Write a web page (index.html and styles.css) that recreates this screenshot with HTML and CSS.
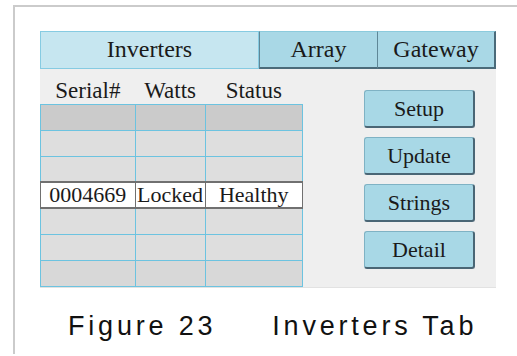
FILE: index.html
```html
<!DOCTYPE html>
<html lang="en">
<head>
    <meta charset="UTF-8">
    <meta name="viewport" content="width=device-width, initial-scale=1.0">
    <link rel="stylesheet" href="styles.css">
</head>
<body>
    <div class="frame">
        <div class="panel">
            <div class="tabs">
                <div class="tab active">Inverters</div>
                <div class="tab">Array</div>
                <div class="tab last">Gateway</div>
            </div>
            <div class="content">
                <table class="grid">
                    <thead>
                        <tr>
                            <th class="col-serial">Serial#</th>
                            <th class="col-watts">Watts</th>
                            <th class="col-status">Status</th>
                        </tr>
                    </thead>
                    <tbody>
                        <tr class="dark"><td></td><td></td><td></td></tr>
                        <tr><td></td><td></td><td></td></tr>
                        <tr><td></td><td></td><td></td></tr>
                        <tr class="selected"><td>0004669</td><td>Locked</td><td>Healthy</td></tr>
                        <tr><td></td><td></td><td></td></tr>
                        <tr><td></td><td></td><td></td></tr>
                        <tr class="bottom"><td></td><td></td><td></td></tr>
                    </tbody>
                </table>
                <div class="buttons">
                    <div class="btn">Setup</div>
                    <div class="btn">Update</div>
                    <div class="btn">Strings</div>
                    <div class="btn">Detail</div>
                </div>
            </div>
        </div>
        <p class="caption"><span>Figure 23</span><span class="caption-title">Inverters Tab</span></p>
    </div>
</body>
</html>
```

FILE: styles.css
```css
body {
    margin: 0;
    background-color: #fff;
    font-family: "Liberation Serif", "Times New Roman", serif;
    color: #1a1a1a;
}

.frame {
    margin: 5px 0 0 13px;
    height: 349px;
    border-top: 2px solid #cbcbcb;
    border-left: 2px solid #cbcbcb;
    padding: 24px 0 0 25px;
    box-sizing: border-box;
}

.panel {
    width: 456px;
    height: 257px;
}

.tabs {
    display: flex;
    height: 38px;
}

.tab {
    width: 118px;
    box-sizing: border-box;
    background-color: #a9d8e6;
    border-left: 1px solid #5f8797;
    border-top: 1px solid #8ccbdd;
    border-bottom: 2px solid #4b6b7a;
    text-align: center;
    font-size: 24px;
    line-height: 35px;
}

.tab.active {
    width: 219px;
    background-color: #c6e6f0;
    border: 1px solid #86cbe2;
    line-height: 35px;
}

.tab.last {
    width: 119px;
    border-right: 2px solid #4b6b7a;
}

.content {
    display: flex;
    height: 219px;
    background-color: #efefef;
    border-bottom: 1px solid #e2e2e2;
    box-sizing: border-box;
}

.grid {
    border-collapse: collapse;
    width: 263px;
    font-size: 23px;
    align-self: flex-start;
}

.grid th {
    font-weight: normal;
    height: 35px;
    padding: 0 0 1px;
    vertical-align: bottom;
    line-height: 24px;
    box-sizing: border-box;
}

.col-serial { width: 95px; }
.col-watts { width: 70px; }
.col-status { width: 98px; }

.grid td {
    height: 26px;
    padding: 0;
    border: 1px solid #6cc3e0;
    background-color: #dedede;
    text-align: center;
    font-size: 22px;
    line-height: 22px;
    box-sizing: border-box;
}

.grid tr.dark td {
    background-color: #cbcbcb;
}

.grid tr.bottom td {
    background-color: #d8d8d8;
}

.grid tr.selected td {
    background-color: #fff;
    border: 1px solid #707070;
    border-top-width: 2px;
    border-bottom-width: 2px;
}

.buttons {
    display: flex;
    flex-direction: column;
    gap: 9px;
    padding: 21px 0 0 61px;
}

.btn {
    width: 111px;
    height: 38px;
    box-sizing: border-box;
    background-color: #a8d8e6;
    border: 1px solid #7fb2c4;
    border-right: 2px solid #4a6675;
    border-bottom: 2px solid #4a6675;
    border-radius: 3px;
    text-align: center;
    font-size: 22px;
    line-height: 35px;
}

.caption {
    margin: 23px 0 0 28px;
    font-family: "Liberation Sans", Arial, sans-serif;
    font-size: 27px;
    line-height: 30px;
    letter-spacing: 3.8px;
    color: #111;
}

.caption-title {
    margin-left: 56px;
}
```
